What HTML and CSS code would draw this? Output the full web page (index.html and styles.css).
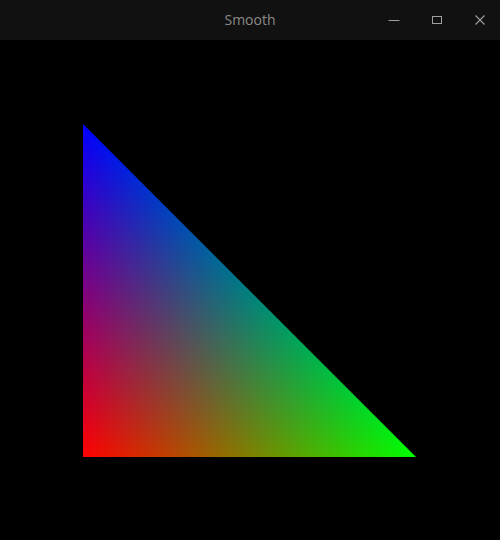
FILE: index.html
```html
<!DOCTYPE html>
<html>
<head>
<meta charset="utf-8">
<link rel="stylesheet" href="styles.css">
</head>
<body>
<div class="window">
  <header class="titlebar">
    <span class="title">Smooth</span>
    <div class="controls">
      <svg class="ctl" width="12" height="12" viewBox="0 0 12 12"><path d="M0.5 6.5H11.5" stroke="#a0a0a0" stroke-width="1" fill="none"/></svg>
      <svg class="ctl" width="12" height="12" viewBox="0 0 12 12"><rect x="1.5" y="2.5" width="9" height="7" stroke="#a0a0a0" stroke-width="1" fill="none"/></svg>
      <svg class="ctl" width="12" height="12" viewBox="0 0 12 12"><path d="M1.5 1.5L10.5 10.5M10.5 1.5L1.5 10.5" stroke="#a0a0a0" stroke-width="1.1" fill="none"/></svg>
    </div>
  </header>
  <main class="canvas">
    <div class="triangle"></div>
  </main>
</div>
</body>
</html>
```
FILE: styles.css
```css
html, body {
  margin: 0;
  padding: 0;
  background: #000;
}
.window {
  width: 500px;
  height: 540px;
  display: flex;
  flex-direction: column;
}
.titlebar {
  height: 40px;
  flex: none;
  background: #111111;
  position: relative;
  display: flex;
  align-items: center;
  justify-content: center;
}
.title {
  font-family: "Open Sans", "Noto Sans", sans-serif;
  font-size: 14px;
  color: #8a8a8a;
  margin-top: -1px;
}
.controls {
  position: absolute;
  right: 14px;
  top: 14px;
  display: flex;
  gap: 31px;
}
.ctl {
  display: block;
}
.canvas {
  flex: 1;
  background: #000;
  padding: 84px 0 0 83px;
}
.triangle {
  width: 333px;
  height: 333px;
  clip-path: polygon(0 0, 0 100%, 100% 100%);
  background:
    linear-gradient(to top, #000 0%, #00f 100%),
    linear-gradient(to right, #000 0%, #0f0 100%),
    linear-gradient(to bottom left, #000 50%, #f00 100%);
  background-blend-mode: screen;
}
```
